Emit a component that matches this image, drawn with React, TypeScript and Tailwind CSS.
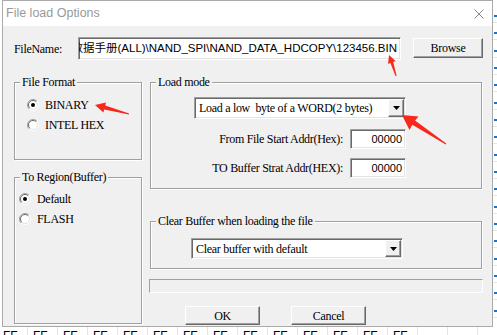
import React from "react";

const serif = "font-['Liberation_Serif',serif] tracking-[-0.3px]";
const sunken =
  "border border-t-[#a0a0a0] border-l-[#a0a0a0] border-b-white border-r-white shadow-[inset_1px_1px_0_#696969,inset_-1px_-1px_0_#e3e3e3]";
const raised =
  "border border-t-white border-l-white border-b-[#696969] border-r-[#696969] shadow-[inset_-1px_-1px_0_#a0a0a0] bg-[#f0f0f0]";

function Radio({ checked, label }: { checked?: boolean; label: string }) {
  return (
    <div className="flex h-[16px] items-center gap-[6px]">
      <svg width="12" height="12" viewBox="0 0 12 12">
        <circle cx="6" cy="6" r="5" fill="#fff" />
        <path d="M2.1 9.9 A5.5 5.5 0 0 1 9.9 2.1" fill="none" stroke="#a0a0a0" />
        <path d="M9.9 2.1 A5.5 5.5 0 0 1 2.1 9.9" fill="none" stroke="#fff" />
        <path d="M2.8 9.2 A4.5 4.5 0 0 1 9.2 2.8" fill="none" stroke="#696969" />
        <path d="M9.2 2.8 A4.5 4.5 0 0 1 2.8 9.2" fill="none" stroke="#e3e3e3" />
        {checked && <circle cx="6" cy="6" r="2" fill="#000" />}
      </svg>
      <span className={`${serif} text-[12px] leading-[12px] text-black`}>{label}</span>
    </div>
  );
}

function Group({
  title,
  className,
  children,
}: {
  title: string;
  className: string;
  children?: React.ReactNode;
}) {
  return (
    <fieldset
      className={`border border-[#a0a0a0] shadow-[1px_1px_0_#fff,inset_1px_1px_0_#fff] ${className}`}
    >
      <legend
        className={`ml-[5px] bg-[#f0f0f0] px-[2px] ${serif} text-[12px] leading-[12px] text-black`}
      >
        {title}
      </legend>
      {children}
    </fieldset>
  );
}

function Combo({ text, className }: { text: string; className: string }) {
  return (
    <div className={`flex items-stretch bg-white p-[1px] ${sunken} ${className}`}>
      <span
        className={`flex flex-1 items-center whitespace-pre pl-[3px] ${serif} text-[12px] text-black`}
      >
        {text}
      </span>
      <div className={`flex w-[16px] items-center justify-center ${raised}`}>
        <svg width="7" height="4" viewBox="0 0 7 4">
          <path d="M0 0 H7 L3.5 4 Z" fill="#000" />
        </svg>
      </div>
    </div>
  );
}

function Button({ label, className }: { label: string; className: string }) {
  return (
    <div
      className={`flex items-center justify-center ${raised} ${serif} text-[12px] text-black ${className}`}
    >
      {label}
    </div>
  );
}

function AddrRow({ label, className }: { label: string; className: string }) {
  return (
    <div className={`flex items-center gap-[7px] ${className}`}>
      <span className={`${serif} text-[12px] text-black`}>{label}</span>
      <div
        className={`flex h-[20px] w-[56px] items-center justify-end bg-white pr-[3px] ${sunken} font-['Liberation_Sans',sans-serif] text-[11px] text-black`}
      >
        00000
      </div>
    </div>
  );
}

function Dialog() {
  return (
    <div className="flex h-[327px] w-[491px] flex-col border border-[#aaaaaa]">
      <div className="flex h-[25px] items-center justify-between bg-white pl-[3px] pr-[8px]">
        <span className="font-['Liberation_Sans',sans-serif] text-[12.5px] text-[#999999]">
          File load Options
        </span>
        <svg width="10" height="10" viewBox="0 0 10 10">
          <path d="M0.5 0.5 L9.5 9.5 M9.5 0.5 L0.5 9.5" stroke="#8a8a8a" strokeWidth="1" />
        </svg>
      </div>

      <div className="flex-1 bg-[#f0f0f0] pl-[11px] pt-[11px]">
        <div className="flex items-start">
          <span className={`w-[64px] pt-[6px] ${serif} text-[12px] leading-[12px] text-black`}>
            FileName:
          </span>
          <div
            className={`flex h-[23px] w-[323px] items-center justify-end overflow-hidden bg-white pr-[3px] ${sunken}`}
          >
            <span className="whitespace-nowrap font-['Liberation_Sans','Noto_Sans_CJK_SC',sans-serif] text-[11.5px] text-black">
              数据手册(ALL)\NAND_SPI\NAND_DATA_HDCOPY\123456.BIN
            </span>
          </div>
          <Button label="Browse" className="ml-[12px] mt-[1px] h-[20px] w-[70px]" />
        </div>

        <div className="mt-[16px] flex gap-[8px]">
          <div className="flex w-[128px] flex-col">
            <Group title="File Format" className="h-[84px]">
              <div className="flex flex-col gap-[4px] pl-[12px] pt-[9px]">
                <Radio checked label="BINARY" />
                <Radio label="INTEL HEX" />
              </div>
            </Group>
            <Group title="To Region(Buffer)" className="mt-[11px] h-[153px]">
              <div className="flex flex-col gap-[4px] pl-[4px] pt-[8px]">
                <Radio checked label="Default" />
                <Radio label="FLASH" />
              </div>
            </Group>
          </div>

          <div className="flex w-[333px] flex-col">
            <Group title="Load mode" className="h-[113px] w-[332px]">
              <div className="flex w-[255px] flex-col items-end pl-[43px] pt-[9px]">
                <Combo
                  text="Load a low  byte of a WORD(2 bytes)"
                  className="h-[22px] w-[212px]"
                />
                <AddrRow label="From File Start Addr(Hex):" className="mt-[10px]" />
                <AddrRow label="TO Buffer Strat Addr(HEX):" className="mt-[9px]" />
              </div>
            </Group>
            <Group title="Clear Buffer when loading the file" className="mt-[26px] h-[54px] w-[332px]">
              <div className="pl-[40px] pt-[11px]">
                <Combo text="Clear buffer with default" className="h-[21px] w-[212px]" />
              </div>
            </Group>
            <div className="-ml-px mt-[10px] h-[14px] w-[334px] border border-t-[#a0a0a0] border-l-[#a0a0a0] border-b-white border-r-white" />
            <div className="mt-[13px] flex pl-[35px]">
              <Button label="OK" className="h-[19px] w-[75px]" />
              <Button label="Cancel" className="ml-[31px] h-[19px] w-[75px]" />
            </div>
          </div>
        </div>
      </div>
    </div>
  );
}

function RightStrip() {
  const ticks = Array.from({ length: 18 });
  return (
    <div className="flex w-[4px] flex-col bg-white pt-[15px]">
      {ticks.map((_, i) => (
        <div key={i} className="flex h-[18px] flex-col">
          <div className="ml-[1px] h-[2px] w-[3px] bg-[#0a78d7]" />
          <div className="mt-[5px] h-px w-full bg-[#e6e6e6]" />
        </div>
      ))}
    </div>
  );
}

function HexRow() {
  const cells = Array.from({ length: 16 });
  return (
    <div className="-ml-[2px] flex h-[8px] overflow-hidden bg-white">
      {cells.map((_, i) => (
        <div
          key={i}
          className="h-[14px] w-[30px] shrink-0 border-r border-[#e4e4e4] pl-[5px] pt-[3px] font-['Liberation_Sans',sans-serif] text-[12px] leading-[12px] text-black"
        >
          {i < 14 ? "FF" : ""}
        </div>
      ))}
    </div>
  );
}

function Arrows() {
  return (
    <svg
      className="pointer-events-none absolute inset-0"
      width="497"
      height="335"
      viewBox="0 0 497 335"
    >
      <g fill="#f8281c">
        <polygon points="389,55 395.5,61.1 393.2,62 396.6,75.8 395.6,76.2 390.4,63 388.1,63.9" />
        <polygon points="95,105 106,102.6 105.2,105.6 129.1,113.4 128.9,114.6 104.2,109.5 103.4,112.6" />
        <polygon points="402,115 418.5,116.5 415.1,120.6 446.3,143.5 445.7,144.5 412.3,124.8 409.5,130" />
      </g>
    </svg>
  );
}

export default function App() {
  return (
    <div className="relative h-[335px] w-[497px] overflow-hidden bg-white">
      <div className="flex h-[327px]">
        <div className="w-[2px] bg-white" />
        <Dialog />
        <RightStrip />
      </div>
      <HexRow />
      <Arrows />
    </div>
  );
}
